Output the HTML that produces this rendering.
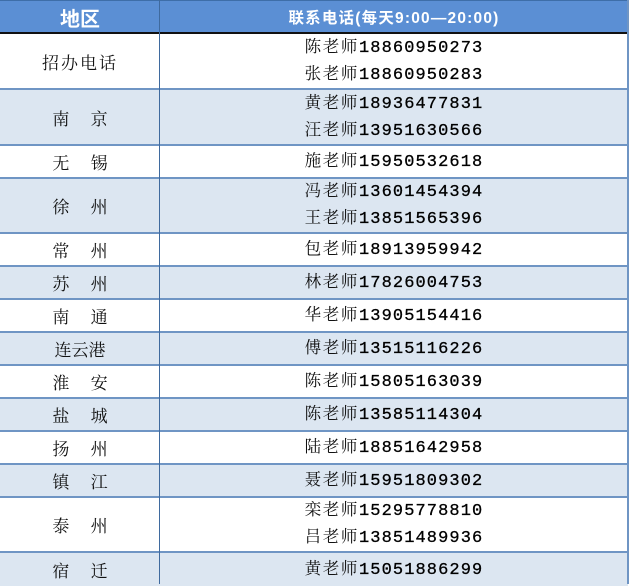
<!DOCTYPE html>
<html><head><meta charset="utf-8"><style>
body{margin:0;width:629px;height:584px;overflow:hidden;background:#fff;font-family:"Liberation Serif","Noto Serif CJK SC",serif;}
.r{position:absolute;left:0;width:628px;border-bottom:2px solid #6f95c4;box-sizing:border-box;}
.b{background:#dce6f1;}
.l{position:absolute;left:0;width:160px;top:0;bottom:0;display:flex;align-items:center;justify-content:center;font-size:17px;color:#111;}
.p{position:absolute;left:160px;right:0;top:-1px;bottom:0;display:flex;flex-direction:column;align-items:center;justify-content:center;font-size:16.5px;color:#111;line-height:25px;letter-spacing:1.6px;}
.p span{font-family:"Liberation Mono",monospace;font-size:17px;letter-spacing:1.1px;color:#000;-webkit-text-stroke:0.3px #000;}
.h{position:absolute;left:0;top:0;width:628px;height:34px;background:#5b8fd4;border-bottom:2px solid #111;box-sizing:border-box;border-top:1px solid #3e6ea8;}
.vl{position:absolute;left:159px;top:0;width:1px;height:584px;background:#3f6a9e;}
.rb{position:absolute;left:627px;top:0;width:2px;height:584px;background:#6f95c4;}
</style></head><body>
<div class="h">
<div style="position:absolute;left:0;width:160px;top:0;height:32px;display:flex;align-items:center;justify-content:center;color:#fff;font-weight:bold;font-size:20px;font-family:'Liberation Sans','Noto Sans CJK SC',sans-serif;">地区</div>
<div style="position:absolute;left:160px;right:0;top:0;height:32px;display:flex;align-items:center;justify-content:center;color:#fff;font-weight:bold;font-size:15.5px;font-family:'Liberation Sans','Noto Sans CJK SC',sans-serif;letter-spacing:1.2px;">联系电话(每天9:00—20:00)</div>
</div>
<div class="r" style="top:34px;height:56px"><div class="l" style="letter-spacing:2px">招办电话</div><div class="p"><div>陈老师<span>18860950273</span></div><div>张老师<span>18860950283</span></div></div></div>
<div class="r b" style="top:90px;height:56px"><div class="l">南&emsp;&nbsp;京</div><div class="p"><div>黄老师<span>18936477831</span></div><div>汪老师<span>13951630566</span></div></div></div>
<div class="r" style="top:146px;height:33px"><div class="l">无&emsp;&nbsp;锡</div><div class="p"><div>施老师<span>15950532618</span></div></div></div>
<div class="r b" style="top:179px;height:55px"><div class="l">徐&emsp;&nbsp;州</div><div class="p"><div>冯老师<span>13601454394</span></div><div>王老师<span>13851565396</span></div></div></div>
<div class="r" style="top:234px;height:33px"><div class="l">常&emsp;&nbsp;州</div><div class="p"><div>包老师<span>18913959942</span></div></div></div>
<div class="r b" style="top:267px;height:33px"><div class="l">苏&emsp;&nbsp;州</div><div class="p"><div>林老师<span>17826004753</span></div></div></div>
<div class="r" style="top:300px;height:33px"><div class="l">南&emsp;&nbsp;通</div><div class="p"><div>华老师<span>13905154416</span></div></div></div>
<div class="r b" style="top:333px;height:33px"><div class="l">连云港</div><div class="p"><div>傅老师<span>13515116226</span></div></div></div>
<div class="r" style="top:366px;height:33px"><div class="l">淮&emsp;&nbsp;安</div><div class="p"><div>陈老师<span>15805163039</span></div></div></div>
<div class="r b" style="top:399px;height:33px"><div class="l">盐&emsp;&nbsp;城</div><div class="p"><div>陈老师<span>13585114304</span></div></div></div>
<div class="r" style="top:432px;height:33px"><div class="l">扬&emsp;&nbsp;州</div><div class="p"><div>陆老师<span>18851642958</span></div></div></div>
<div class="r b" style="top:465px;height:33px"><div class="l">镇&emsp;&nbsp;江</div><div class="p"><div>聂老师<span>15951809302</span></div></div></div>
<div class="r" style="top:498px;height:55px"><div class="l">泰&emsp;&nbsp;州</div><div class="p"><div>栾老师<span>15295778810</span></div><div>吕老师<span>13851489936</span></div></div></div>
<div class="r b" style="top:553px;height:33px;border-bottom:none"><div class="l">宿&emsp;&nbsp;迁</div><div class="p"><div>黄老师<span>15051886299</span></div></div></div>
<div class="vl"></div><div class="rb"></div>
</body></html>
